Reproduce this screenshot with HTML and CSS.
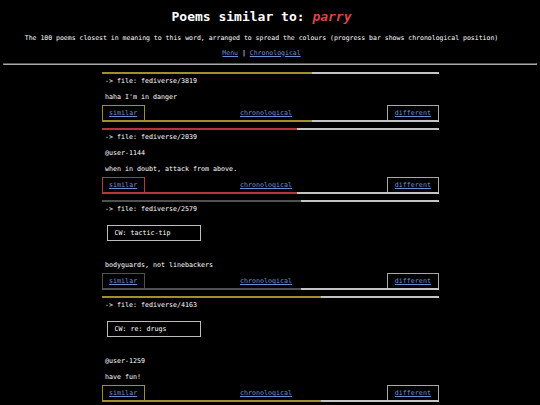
FILE: index.html
```html
<!DOCTYPE html>
<html lang="en">
<head>
  <meta charset="UTF-8">
  <title>Poems similar to: parry</title>
  <link rel="stylesheet" href="styles.css">
</head>
<body>
  <header>
    <h1>Poems similar to: <em>parry</em></h1>
    <p class="sub">The 100 poems closest in meaning to this word, arranged to spread the colours (progress bar shows chronological position)</p>
    <p class="links"><a href="#">Menu</a> | <a href="#">Chronological</a></p>
  </header>
  <hr>

  <article class="poem olive">
    <div class="bar"><div class="fill" style="width: 62.6%"></div></div>
    <p>-&gt; file: fediverse/3819</p>
    <p>haha I'm in danger</p>
    <nav class="nav">
      <a class="box sim" href="#">similar</a>
      <a href="#">chronological</a>
      <a class="box diff" href="#">different</a>
    </nav>
    <div class="bar bottom"><div class="fill" style="width: 62.6%"></div></div>
  </article>

  <article class="poem red">
    <div class="bar"><div class="fill" style="width: 58.1%"></div></div>
    <p>-&gt; file: fediverse/2039</p>
    <p>@user-1144</p>
    <p>when in doubt, attack from above.</p>
    <nav class="nav">
      <a class="box sim" href="#">similar</a>
      <a href="#">chronological</a>
      <a class="box diff" href="#">different</a>
    </nav>
    <div class="bar bottom"><div class="fill" style="width: 58.1%"></div></div>
  </article>

  <article class="poem grey">
    <div class="bar"><div class="fill" style="width: 59.2%"></div></div>
    <p>-&gt; file: fediverse/2579</p>
    <div class="cw">CW: tactic-tip</div>
    <p>bodyguards, not linebackers</p>
    <nav class="nav">
      <a class="box sim" href="#">similar</a>
      <a href="#">chronological</a>
      <a class="box diff" href="#">different</a>
    </nav>
    <div class="bar bottom"><div class="fill" style="width: 59.2%"></div></div>
  </article>

  <article class="poem olive">
    <div class="bar"><div class="fill" style="width: 65.1%"></div></div>
    <p>-&gt; file: fediverse/4163</p>
    <div class="cw">CW: re: drugs</div>
    <p>@user-1259</p>
    <p>have fun!</p>
    <nav class="nav">
      <a class="box sim" href="#">similar</a>
      <a href="#">chronological</a>
      <a class="box diff" href="#">different</a>
    </nav>
    <div class="bar bottom"><div class="fill" style="width: 65.1%"></div></div>
  </article>
</body>
</html>
```

FILE: styles.css
```css
body {
  background: #000;
  color: #fff;
  font-family: "DejaVu Sans Mono", monospace;
  margin: 3.4px;
}
a {
  color: #6f8dd4;
}
header {
  text-align: center;
  padding-right: 17px;
}
h1 {
  font-size: 13px;
  line-height: 15px;
  margin: 6px 0 0;
}
h1 em {
  color: #dd4444;
}
.sub, .links {
  font-size: 6.5px;
  line-height: 8px;
  margin: 0;
}
.sub {
  margin-top: 9.3px;
}
.links {
  margin-top: 7px;
}
hr {
  margin: 6.3px 0 0;
  border: 1px inset #aaa;
  height: 0;
}
.poem {
  width: 337px;
  margin: 7.5px auto 0;
  font-size: 6.67px;
}
.poem + .poem {
  margin-top: 6.5px;
}
.poem p {
  margin: 0;
  padding: 0 3.4px;
  line-height: 16px;
}
.bar {
  height: 2px;
  background: #c4c4c4;
  margin-bottom: -1px;
  position: relative;
}
.bar.bottom {
  margin: -1.5px 0 0;
}
.fill {
  height: 100%;
}
.nav {
  display: flex;
  justify-content: space-between;
  align-items: center;
  height: 16px;
  line-height: 14px;
}
.box {
  border: 1px solid #a8a8a8;
  padding: 0 6.6px;
}
.cw {
  width: 79px;
  margin: 8px 0 16px 5.5px;
  border: 1px solid #bdbdbd;
  padding: 0 6.5px;
  line-height: 14px;
}
.olive .fill { background: #a08f2c; }
.olive .sim { border-color: #a08f2c; }
.red .fill { background: #b23838; }
.red .sim { border-color: #b23838; }
.grey .fill { background: #505050; }
.grey .sim { border-color: #505050; }
```
